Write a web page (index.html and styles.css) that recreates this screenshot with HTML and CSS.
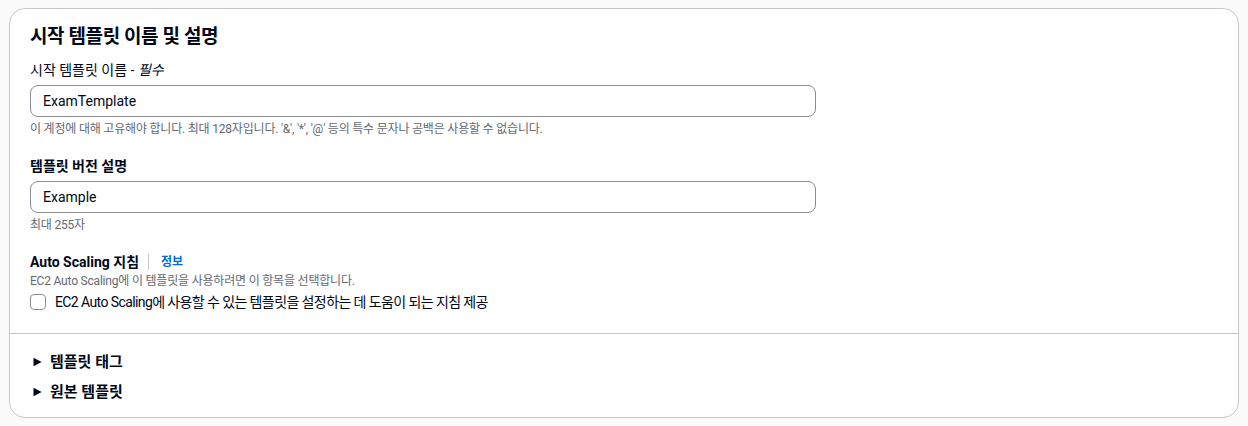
FILE: index.html
```html
<!DOCTYPE html>
<html lang="ko">
<head>
<meta charset="utf-8">
<link rel="stylesheet" href="styles.css">
</head>
<body>
<div class="card">
  <div class="card-body">
    <h2 class="title">시작 템플릿 이름 및 설명</h2>
    <div class="field">
      <label class="label">시작 템플릿 이름 - <i>필수</i></label>
      <div class="input">ExamTemplate</div>
      <div class="help">이 계정에 대해 고유해야 합니다. 최대 128자입니다. '&amp;', '*', '@' 등의 특수 문자나 공백은 사용할 수 없습니다.</div>
    </div>
    <div class="field">
      <label class="label bold">템플릿 버전 설명</label>
      <div class="input">Example</div>
      <div class="help">최대 255자</div>
    </div>
    <div class="field">
      <div class="label-row"><span class="label bold">Auto Scaling 지침</span><span class="sep"></span><a class="info">정보</a></div>
      <div class="desc">EC2 Auto Scaling에 이 템플릿을 사용하려면 이 항목을 선택합니다.</div>
      <div class="check-row"><span class="checkbox"></span><span class="check-text">EC2 Auto Scaling에 사용할 수 있는 템플릿을 설정하는 데 도움이 되는 지침 제공</span></div>
    </div>
  </div>
  <div class="card-footer">
    <div class="expander"><svg class="caret" width="9" height="10" viewBox="0 0 9 10"><path d="M0.5 0.8 L8.6 5 L0.5 9.2 Z" fill="#000716"/></svg><span>템플릿 태그</span></div>
    <div class="expander"><svg class="caret" width="9" height="10" viewBox="0 0 9 10"><path d="M0.5 0.8 L8.6 5 L0.5 9.2 Z" fill="#000716"/></svg><span>원본 템플릿</span></div>
  </div>
</div>
</body>
</html>
```
FILE: styles.css
```css
* { box-sizing: border-box; }
html, body { margin: 0; padding: 0; }
body {
  background: #fafafa;
  font-family: Roboto, "Noto Sans CJK KR", sans-serif;
  color: #000716;
  font-size: 14px;
  line-height: 22px;
  padding: 8px 9px;
}
.card {
  background: #fff;
  border: 1px solid #c6c6cd;
  border-radius: 16px;
  width: 1230px;
  height: 410px;
}
.card-body {
  padding: 17px 20px 20px;
  border-bottom: 1px solid #c6c6cd;
}
.title {
  margin: 0;
  font-size: 19px;
  letter-spacing: -0.4px;
  line-height: 22px;
  font-weight: 700;
}
.field { display: flex; flex-direction: column; }
.field + .field { margin-top: 18px; }
.title + .field { margin-top: 11px; }
.label { font-size: 14px; line-height: 22px; }
.label i { font-style: italic; }
.bold { font-weight: 700; }
.input {
  margin-top: 4px;
  width: 786px;
  height: 32px;
  border: 1px solid #8c8c94;
  border-radius: 8px;
  padding: 0 12px;
  display: flex;
  align-items: center;
  font-size: 14px;
}
.help {
  margin-top: 4px;
  font-size: 12px;
  line-height: 16px;
  letter-spacing: -0.2px;
  color: #656871;
}
.label-row { display: flex; align-items: center; }
.sep {
  width: 1px;
  height: 16px;
  background: #c6c6cd;
  margin: 0 12px 0 9px;
}
.info {
  font-size: 12px;
  font-weight: 700;
  color: #006ce0;
  text-decoration: none;
}
.desc {
  font-size: 12px;
  line-height: 16px;
  letter-spacing: -0.2px;
  color: #656871;
}
.check-row {
  margin-top: 2px;
  display: flex;
  align-items: center;
  gap: 9px;
  font-size: 14px;
  line-height: 22px;
}
.check-text { letter-spacing: -0.6px; }
.checkbox {
  width: 16px;
  height: 16px;
  border: 1.5px solid #8c8c94;
  border-radius: 4px;
  flex: none;
}
.card-footer {
  padding: 17px 20px 16px 23px;
  display: flex;
  flex-direction: column;
  gap: 8px;
}
.expander {
  display: flex;
  align-items: center;
  gap: 8px;
  font-weight: 700;
  font-size: 15px;
  line-height: 22px;
}
.caret { flex: none; }
```
